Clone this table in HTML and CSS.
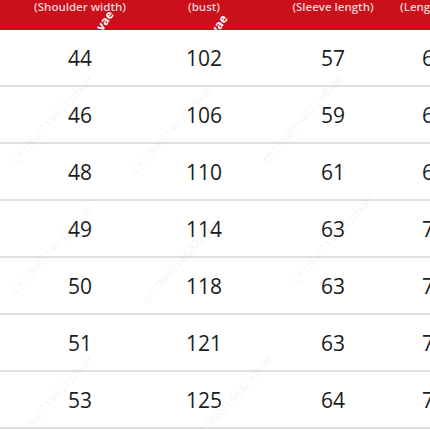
FILE: index.html
```html
<!DOCTYPE html>
<html>
<head>
<meta charset="utf-8">
<link rel="stylesheet" href="styles.css">
</head>
<body>
<div class="chart">
  <div class="head">
    <div class="hc">(Shoulder width)</div>
    <div class="hc">(bust)</div>
    <div class="hc">(Sleeve length)</div>
    <div class="hc hc-last">(Length of coat)</div>
  </div>
  <div class="row"><div class="c">44</div><div class="c">102</div><div class="c">57</div><div class="c">66</div></div>
  <div class="row"><div class="c">46</div><div class="c">106</div><div class="c">59</div><div class="c">68</div></div>
  <div class="row"><div class="c">48</div><div class="c">110</div><div class="c">61</div><div class="c">69</div></div>
  <div class="row"><div class="c">49</div><div class="c">114</div><div class="c">63</div><div class="c">70</div></div>
  <div class="row"><div class="c">50</div><div class="c">118</div><div class="c">63</div><div class="c">71</div></div>
  <div class="row"><div class="c">51</div><div class="c">121</div><div class="c">63</div><div class="c">72</div></div>
  <div class="row"><div class="c">53</div><div class="c">125</div><div class="c">64</div><div class="c">73</div></div>

  <div class="wm wm1">cn1068914632zdvae</div>
  <div class="wm wm2">cn1068914632zdvae</div>
  <div class="wm wm3">cn1068914632zdvae</div>
  <div class="wm wm4">cn1068914632zdvae</div>
  <div class="wm wm5">cn1068914632zdvae</div>
  <div class="wm wm6">cn1068914632zdvae</div>
  <div class="wm wm7">cn1068914632zdvae</div>
  <div class="wm wm8">cn1068914632zdvae</div>
  <div class="mark mark1">vae</div>
  <div class="mark mark2">vae</div>
</div>
</body>
</html>
```

FILE: styles.css
```css
html, body {
  margin: 0;
  padding: 0;
  overflow: hidden;
  background: #ffffff;
}

.chart {
  position: relative;
  width: 430px;
  height: 430px;
  overflow: hidden;
  font-family: "Open Sans", "Liberation Sans", sans-serif;
}

.head,
.row {
  display: grid;
  grid-template-columns: 124px 124px 134px 68px;
  padding-left: 18px;
}

.head {
  height: 30px;
  background: #c9101b;
  align-items: start;
}

.hc {
  text-align: center;
  color: #f7d3d5;
  font-size: 11.5px;
  font-weight: 600;
  line-height: 12px;
  padding-top: 1px;
  white-space: nowrap;
}

.hc-last {
  text-align: left;
  padding-left: 0;
}

.row {
  height: 55px;
  border-bottom: 2px solid #e0e0e0;
  align-items: center;
}

.c {
  text-align: center;
  font-size: 21px;
  color: #1c1c1c;
  white-space: nowrap;
}

.wm {
  position: absolute;
  font-size: 12px;
  color: rgba(150, 150, 150, 0.12);
  transform: rotate(-48deg);
  transform-origin: left bottom;
  white-space: nowrap;
  pointer-events: none;
}

.wm1 { left: 20px; top: 150px; }
.wm2 { left: 140px; top: 160px; }
.wm3 { left: 270px; top: 150px; }
.wm4 { left: 20px; top: 280px; }
.wm5 { left: 150px; top: 290px; }
.wm6 { left: 300px; top: 270px; }
.wm7 { left: 20px; top: 430px; }
.wm8 { left: 200px; top: 430px; }

.mark {
  position: absolute;
  color: #ffffff;
  font-weight: 700;
  font-size: 12px;
  transform: rotate(-55deg);
}

.mark1 { left: 94px; top: 12px; }
.mark2 { left: 208px; top: 16px; }
```
